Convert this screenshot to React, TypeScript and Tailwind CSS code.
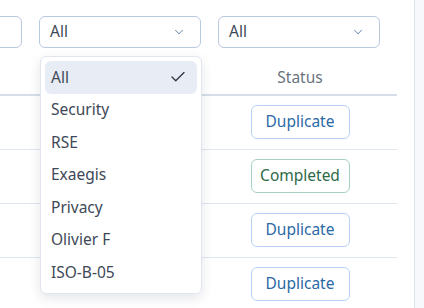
import { ChevronDown, Check } from 'lucide-react';

const options = ['All', 'Security', 'RSE', 'Exaegis', 'Privacy', 'Olivier F', 'ISO-B-05'];

const rows = ['Duplicate', 'Completed', 'Duplicate', 'Duplicate'];

function SelectBox({ value }: { value: string }) {
  return (
    <div className="flex h-[32px] w-[162px] shrink-0 items-center justify-between rounded-md border border-[#b9c9dd] bg-white pl-[10px] pr-[14px] text-[15.5px] text-[#404857]">
      <span>{value}</span>
      <ChevronDown className="h-[14px] w-[14px] text-[#7b93b4]" strokeWidth={1.75} />
    </div>
  );
}

function StatusButton({ label }: { label: string }) {
  const done = label === 'Completed';
  return (
    <button
      className={
        done
          ? 'h-[34px] w-[99px] rounded-md border border-[#a8d0c2] bg-white text-[15.5px] text-[#2f6a48]'
          : 'h-[34px] w-[99px] rounded-md border border-[#b9d2f6] bg-white text-[15.5px] text-[#2b69a6]'
      }
    >
      {label}
    </button>
  );
}

export default function App() {
  return (
    <div className="relative flex h-[308px] w-[424px] overflow-hidden bg-white font-['Noto_Sans',sans-serif]">
      {/* Main */}
      <div className="w-[414px] shrink-0">
        {/* Filters */}
        <div className="flex gap-[17px] pt-[16px]">
          <div className="ml-[-140px] h-[32px] w-[162px] shrink-0 rounded-md border border-[#b9c9dd]" />
          <SelectBox value="All" />
          <SelectBox value="All" />
        </div>

        {/* Table */}
        <div className="mt-[11px] w-[397px]">
          <div className="grid h-[37px] grid-cols-[203px_194px] border-b-2 border-[#d6dee9]">
            <div />
            <div className="flex items-center justify-center pt-[2px] text-[15.5px] text-[#6b7380]">Status</div>
          </div>
          {rows.map((r, i) => (
            <div key={i} className="grid h-[54px] grid-cols-[203px_194px] border-b border-[#dfe6f0]">
              <div />
              <div className="flex items-center justify-center pb-[2px]">
                <StatusButton label={r} />
              </div>
            </div>
          ))}
        </div>
      </div>

      {/* Side panel edge */}
      <div className="flex-1 border-l border-[#dce3ed] bg-[#f7f8fb]" />

      {/* Dropdown menu */}
      <div className="absolute left-[40px] top-[56px] w-[162px] rounded-md border border-[#e1e6ee] bg-white p-[4px] shadow-[0_4px_12px_rgba(30,45,70,0.12)]">
        {options.map((o, i) => (
          <div
            key={o}
            className={
              i === 0
                ? 'flex h-[32.5px] items-center justify-between rounded-md bg-[#e8ecf4] pl-[6px] pr-[10px] text-[15.5px] text-[#404857]'
                : 'flex h-[32.5px] items-center justify-between pl-[6px] pr-[10px] text-[15.5px] text-[#404857]'
            }
          >
            <span>{o}</span>
            {i === 0 && <Check className="h-[18px] w-[18px] text-[#2d3440]" strokeWidth={1.75} />}
          </div>
        ))}
      </div>
    </div>
  );
}
